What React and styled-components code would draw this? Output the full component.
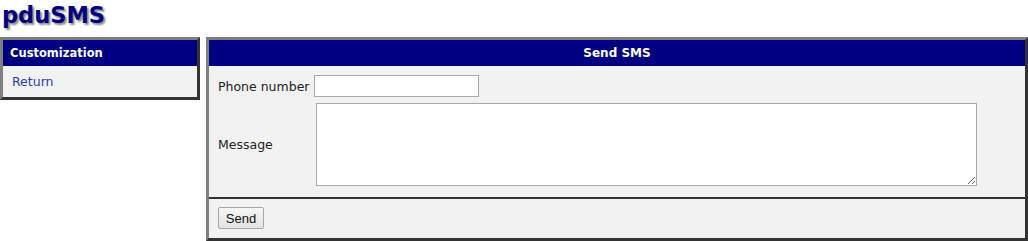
import React from "react";
import styled, { createGlobalStyle } from "styled-components";

const Global = createGlobalStyle`
  html, body { margin: 0; padding: 0; background: #fff; }
  body { font-family: "DejaVu Sans", Verdana, sans-serif; font-size: 12.5px; color: #222; }
`;

const Page = styled.div`
  display: flex;
  flex-direction: column;
  width: 1028px;
`;

const Title = styled.h1`
  margin: 0;
  padding: 0 0 0 2px;
  height: 37px;
  font-family: "DejaVu Sans", Verdana, sans-serif;
  font-weight: bold;
  font-size: 22.5px;
  line-height: 30px;
  color: #000080;
  text-shadow: 2px 2px 2px #8a8a8a;
`;

const Columns = styled.div`
  display: flex;
  gap: 6px;
  align-items: flex-start;
`;

const Panel = styled.section`
  box-sizing: border-box;
  width: ${(p) => p.$width || "auto"};
  flex: ${(p) => (p.$grow ? 1 : "none")};
  border-style: solid;
  border-width: 3px;
  border-color: #7f7f7f #333 #333 #7f7f7f;
  background: #f2f2f2;
`;

const PanelHeader = styled.div`
  background: #000080;
  color: #fff;
  font-weight: bold;
  font-size: ${(p) => (p.$center ? "12px" : "11.5px")};
  height: 26px;
  line-height: 26px;
  padding: 0 7px;
  text-align: ${(p) => (p.$center ? "center" : "left")};
`;

const MenuBody = styled.div`
  height: 31px;
  display: flex;
  align-items: center;
  padding: 0 9px;
`;

const MenuLink = styled.a`
  color: #2b3cb0;
  text-decoration: none;
  font-size: 12.5px;
  cursor: pointer;
`;

const FormBody = styled.div`
  display: grid;
  grid-template-columns: 96px auto;
  align-items: center;
  row-gap: 6px;
  padding: 9px 9px 11px 9px;
  border-bottom: 2px solid #333;
`;

const Label = styled.label`
  font-size: 12.5px;
  color: #222;
  white-space: nowrap;
`;

const TextInput = styled.input`
  box-sizing: border-box;
  width: 165px;
  height: 22px;
  border: 1px solid #a9a9a9;
  background: #fff;
  margin: 0;
  padding: 1px 3px;
  font-family: inherit;
  outline: none;
`;

const TextArea = styled.textarea`
  box-sizing: border-box;
  width: 661px;
  height: 83px;
  border: 1px solid #a9a9a9;
  background: #fff;
  margin: 0 0 0 2px;
  padding: 2px;
  font-family: inherit;
  outline: none;
  display: block;
`;

const Footer = styled.div`
  padding: 8px 9px 9px 9px;
`;

const Button = styled.button`
  box-sizing: border-box;
  height: 22px;
  width: 46px;
  padding: 0;
  font-family: "Liberation Sans", Arial, sans-serif;
  font-size: 13px;
  color: #111;
  border: 1px solid #a6a6a6;
  border-radius: 2px;
  background: linear-gradient(#f6f6f6, #e2e2e2);
  cursor: pointer;
`;

export default function App() {
  return (
    <>
      <Global />
      <Page>
        <Title>pduSMS</Title>
        <Columns>
          <Panel $width="200px">
            <PanelHeader>Customization</PanelHeader>
            <MenuBody>
              <MenuLink>Return</MenuLink>
            </MenuBody>
          </Panel>
          <Panel $grow>
            <PanelHeader $center>Send SMS</PanelHeader>
            <FormBody>
              <Label>Phone number</Label>
              <div>
                <TextInput type="text" />
              </div>
              <Label>Message</Label>
              <TextArea />
            </FormBody>
            <Footer>
              <Button>Send</Button>
            </Footer>
          </Panel>
        </Columns>
      </Page>
    </>
  );
}
